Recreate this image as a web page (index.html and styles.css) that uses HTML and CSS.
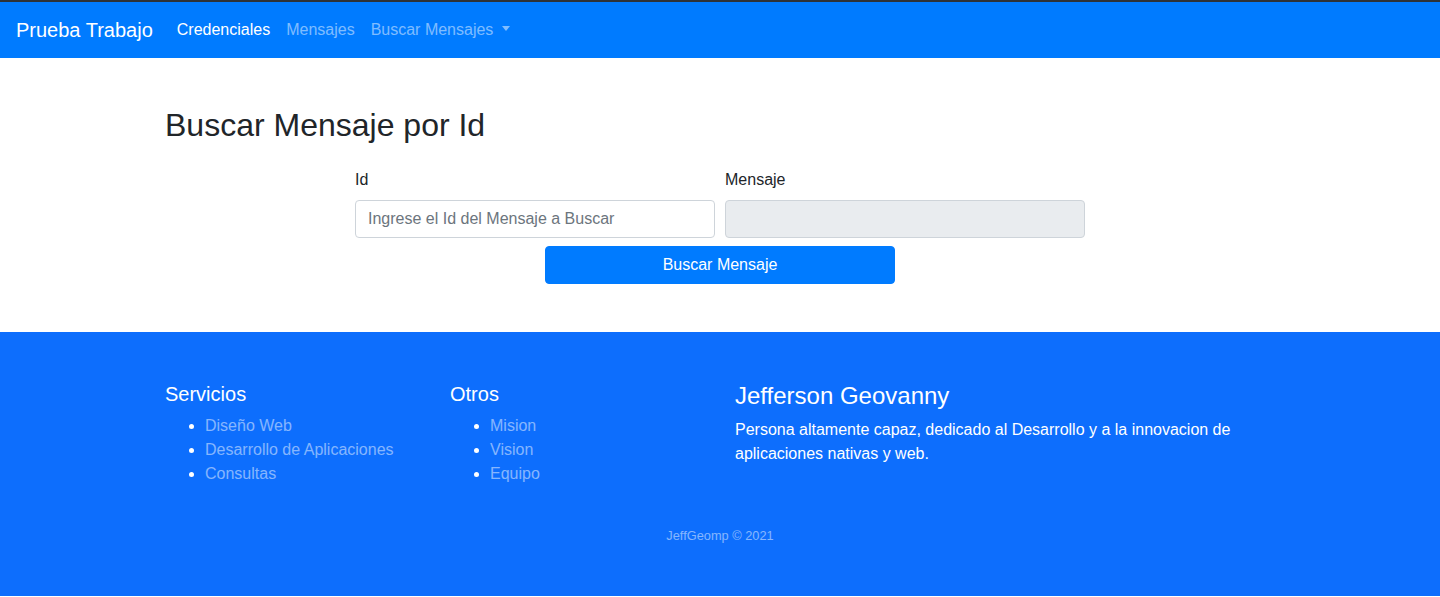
FILE: index.html
```html
<!DOCTYPE html>
<html lang="es">
<head>
<meta charset="utf-8">
<title>Prueba Trabajo</title>
<link rel="stylesheet" href="styles.css">
</head>
<body>
<nav class="navbar">
  <a class="brand" href="#">Prueba Trabajo</a>
  <ul class="nav">
    <li><a class="nav-link active" href="#">Credenciales</a></li>
    <li><a class="nav-link" href="#">Mensajes</a></li>
    <li><a class="nav-link dropdown" href="#">Buscar Mensajes</a></li>
  </ul>
</nav>
<main class="main">
  <div class="container">
    <h2 class="title">Buscar Mensaje por Id</h2>
    <form class="form">
      <div class="row">
        <div class="field">
          <label class="label">Id</label>
          <input class="input" type="text" placeholder="Ingrese el Id del Mensaje a Buscar">
        </div>
        <div class="field">
          <label class="label">Mensaje</label>
          <input class="input" type="text" disabled>
        </div>
      </div>
      <button class="btn" type="button">Buscar Mensaje</button>
    </form>
  </div>
</main>
<footer class="footer">
  <div class="container">
    <div class="cols">
      <div class="col col-3">
        <h5 class="f-title">Servicios</h5>
        <ul class="f-list">
          <li><a href="#">Diseño Web</a></li>
          <li><a href="#">Desarrollo de Aplicaciones</a></li>
          <li><a href="#">Consultas</a></li>
        </ul>
      </div>
      <div class="col col-3">
        <h5 class="f-title">Otros</h5>
        <ul class="f-list">
          <li><a href="#">Mision</a></li>
          <li><a href="#">Vision</a></li>
          <li><a href="#">Equipo</a></li>
        </ul>
      </div>
      <div class="col col-6">
        <h4 class="f-name">Jefferson Geovanny</h4>
        <p class="f-text">Persona altamente capaz, dedicado al Desarrollo y a la innovacion de aplicaciones nativas y web.</p>
      </div>
    </div>
    <p class="copy">JeffGeomp © 2021</p>
  </div>
</footer>
</body>
</html>
```

FILE: styles.css
```css
* { box-sizing: border-box; }
html, body { margin: 0; padding: 0; }
body {
  font-family: "Liberation Sans", Arial, sans-serif;
  font-size: 16px;
  line-height: 1.5;
  color: #212529;
  background: #fff;
}
a { text-decoration: none; }

.navbar {
  display: flex;
  align-items: center;
  height: 58px;
  padding: 0 16px;
  background: #007bff;
  border-top: 2px solid #2d3238;
}
.brand {
  font-size: 20px;
  line-height: 30px;
  color: #fff;
  margin-right: 16px;
}
.nav {
  display: flex;
  list-style: none;
  margin: 0;
  padding: 0;
}
.nav-link {
  display: block;
  padding: 8px;
  color: rgba(255,255,255,.5);
}
.nav-link.active { color: #fff; }
.dropdown::after {
  content: "";
  display: inline-block;
  margin-left: 9px;
  vertical-align: 4px;
  border-top: 5px solid;
  border-left: 4.5px solid transparent;
  border-right: 4.5px solid transparent;
}

.container {
  width: 1140px;
  margin: 0 auto;
  padding: 0 15px;
}
.main {
  padding: 48px 0 48px;
}
.title {
  margin: 0 0 24px;
  font-size: 32px;
  font-weight: 500;
  line-height: 1.2;
}
.form {
  width: 730px;
  margin: 0 auto;
  display: flex;
  flex-direction: column;
  align-items: center;
  gap: 8px;
}
.row {
  display: flex;
  gap: 10px;
  width: 100%;
}
.field {
  flex: 1;
  display: flex;
  flex-direction: column;
}
.label {
  margin-bottom: 8px;
}
.input {
  height: 38px;
  padding: 6px 12px;
  font: inherit;
  color: #495057;
  background: #fff;
  border: 1px solid #ced4da;
  border-radius: 4px;
}
.input::placeholder { color: #6c757d; }
.input:disabled { background: #e9ecef; }
.btn {
  width: 350px;
  height: 38px;
  font: inherit;
  color: #fff;
  background: #007bff;
  border: 1px solid #007bff;
  border-radius: 4px;
}

.footer {
  background: #0d6efd;
  color: #fff;
  padding: 50px 0 50px;
}
.cols {
  display: flex;
  margin: 0 -15px;
}
.col { padding: 0 15px; }
.col-3 { width: 285px; }
.col-6 { width: 570px; }
.f-title {
  margin: 0 0 8px;
  font-size: 20px;
  font-weight: 500;
  line-height: 1.2;
}
.f-name {
  margin: 0 0 7px;
  font-size: 24px;
  font-weight: 500;
  line-height: 1.2;
}
.f-list {
  margin: 0 0 16px;
  padding-left: 40px;
}
.f-list a { color: rgba(255,255,255,.5); }
.f-text { margin: 0 0 16px; }
.copy {
  margin: 24px 0 0;
  text-align: center;
  font-size: 12.8px;
  color: rgba(255,255,255,.5);
}
```
